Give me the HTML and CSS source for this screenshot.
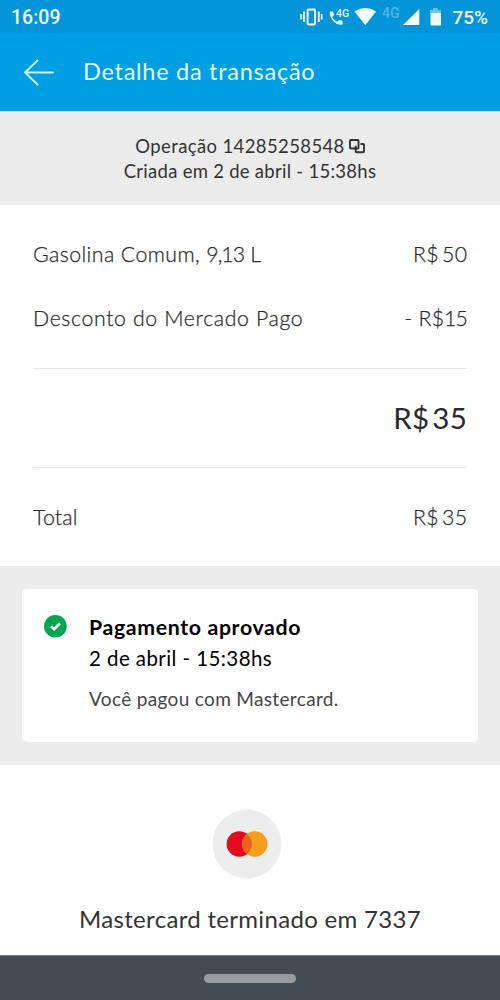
FILE: index.html
```html
<!DOCTYPE html>
<html lang="pt-BR">
<head>
<meta charset="utf-8">
<title>Detalhe da transação</title>
<link rel="stylesheet" href="styles.css">
</head>
<body>
<div class="status">
  <span class="clock">16:09</span>
  <svg class="status-icons" width="150" height="33" viewBox="0 0 150 33" fill="#f2fbff">
    <rect x="7.6" y="9.4" width="7.4" height="15" rx="1" fill="none" stroke="#f2fbff" stroke-width="2"/>
    <path d="M3 11.5h1.9v10.500H3zM.2 14h1.700v5.500H.2zM17.800 11.500h1.900v10.500h-1.900zM20.800 14h1.700v5.500h-1.700z"/>
    <path d="M30.500 11.500h2.700l.9 3.500-1.900 1.900c1.100 2.200 2.700 3.800 4.900 4.900l1.900-1.900 3.500.9v2.900c0 .8-.5 1.100-1.200 1.100-6.500-.5-11-5.600-11.600-12.100 0-.8.2-1.200.8-1.200z"/>
    <text x="36" y="17" class="tiny">4G</text>
    <path d="M54.500 11.400Q65.500 4.500 76 11.400L65.300 25.200z"/>
    <text x="82" y="18" class="network">4G</text>
    <path d="M119.300 9v16H103z"/>
    <path d="M133 8h4.500v3H133z" opacity=".45"/>
    <rect x="130.500" y="10" width="10.500" height="15.500" rx=".8"/>
    <path d="M130.500 10H141v3h-10.500z" fill="#71c6ed"/>
  </svg>
  <span class="battery">75%</span>
</div>
<header class="bar">
  <svg width="32" height="28" viewBox="0 0 32 28" fill="none" stroke="#c9f2ff" stroke-width="1.900" stroke-linecap="round" stroke-linejoin="round"><path d="M14.500 2.500 2 14.500l12.500 12M2 14.500h28"/></svg>
  <h1>Detalhe da transação</h1>
</header>
<section class="operation">
  <p><span class="op-number">Operação 14285258548</span><svg width="16" height="15" viewBox="0 0 16 15" fill="none" stroke="#333" stroke-width="1.900"><rect x="1" y="1" width="8.500" height="8.500" rx=".8"/><path d="M11.500 5h2.700q.8 0 .8.800v6.700q0 .8-.8.800H7.500q-.8 0-.8-.8V10M6.700 10V6.800"/></svg></p>
  <p class="created">Criada em 2 de abril - 15:38hs</p>
</section>
<section class="amounts">
  <div class="row first"><span class="item">Gasolina Comum, <span class="quantity">9,13</span> L</span><span class="price">R$<b>50</b></span></div>
  <div class="row second"><span class="discount">Desconto do Mercado Pago</span><span class="price">- R$<b class="tight">15</b></span></div>
  <div class="row sum"><span class="price">R$<b>35</b></span></div>
  <div class="row total"><span class="total-label">Total</span><span class="price">R$<b>35</b></span></div>
</section>
<section class="payment">
  <div class="card">
    <svg width="24" height="24" viewBox="0 0 24 24"><circle cx="12.400" cy="12.200" r="11.300" fill="#00a650"/><path d="m8 12.200 3.100 3 5.900-5.900" fill="none" stroke="#fff" stroke-width="2.700"/></svg>
    <div class="details">
      <h2>Pagamento aprovado</h2>
      <p class="date">2 de abril - 15:38hs</p>
      <p class="method">Você pagou com Mastercard.</p>
    </div>
  </div>
</section>
<section class="source">
  <svg width="70" height="70" viewBox="0 0 70 70"><circle cx="35" cy="35" r="34.500" fill="#ededed"/><circle cx="27.300" cy="35" r="12.700" fill="#e30b20"/><circle cx="42.800" cy="35" r="12.700" fill="#f79d1c"/><path d="M35.050 24.940a12.700 12.700 0 0 1 0 20.120 12.700 12.700 0 0 1 0-20.120z" fill="#ee6220"/></svg>
  <p>Mastercard terminado em 7337</p>
</section>
<footer class="nav"><span class="pill"></span></footer>
</body>
</html>
```

FILE: styles.css
```css
* { box-sizing: border-box; }
body {
  margin: 0;
  width: 500px;
  height: 1000px;
  overflow: hidden;
  display: flex;
  flex-direction: column;
  background: #fff;
  color: #333;
  font-family: Lato, "Open Sans", sans-serif;
  white-space: nowrap;
}
h1, h2, p { margin: 0; font-weight: 400; }
svg { flex: none; display: block; }

.status {
  height: 33px;
  flex: none;
  display: flex;
  align-items: center;
  padding: 0 12px 0 11px;
  background: #0494d8;
  color: #f2fbff;
  font-family: Roboto, sans-serif;
}
.clock { font-size: 19.5px; font-weight: 500; padding-top: 2px; }
.status-icons { margin-left: auto; }
.battery { width: 38px; text-align: right; font-size: 19px; font-weight: 500; padding-top: 2px; }
.tiny { font: 500 10.5px Roboto, sans-serif; }
.network { font: 500 14px Roboto, sans-serif; fill: #4fb7e7; }

.bar {
  height: 78px;
  flex: none;
  display: flex;
  align-items: center;
  padding: 0 23px 1px;
  background: #009ee3;
}
.bar h1 { margin: 0 0 2px 28px; font-size: 23.5px; color: #e9faff; letter-spacing: .73px; }

.operation {
  height: 94px;
  flex: none;
  padding-top: 22px;
  background: #ececec;
  border-top: 1px solid #dcdfe3;
}
.operation p {
  height: 25px;
  display: flex;
  align-items: center;
  justify-content: center;
  font-size: 18.5px;
  line-height: 25px;
}
.op-number { letter-spacing: .38px; }
.created { letter-spacing: .27px; }
.operation svg { margin-left: 4px; }

.amounts { height: 361px; flex: none; padding: 18px 33px 0; }
.row { display: flex; align-items: center; justify-content: space-between; font-size: 21.3px; line-height: 26px; font-weight: 300; color: #2b2b2b; -webkit-text-stroke: .25px #2b2b2b; }
.row b { font-weight: inherit; margin-left: 3px; letter-spacing: .4px; margin-right: -.4px; }
.row .tight { margin: 0 0 0 -.5px; letter-spacing: -.8px; }
.item { letter-spacing: .42px; }
.quantity { letter-spacing: -1px; }
.discount { letter-spacing: .62px; }
.total-label { letter-spacing: .2px; }
.price { letter-spacing: .3px; }
.first { height: 64px; padding-bottom: 2px; }
.second { height: 82px; padding-bottom: 20px; }
.sum {
  height: 100px;
  justify-content: flex-end;
  margin-top: -1px;
  padding-bottom: 1px;
  border: solid #e8e8e8;
  border-width: 1px 0;
  font-size: 29.5px;
  font-weight: 400;
  -webkit-text-stroke: 0;
}
.total { height: 99px; padding-bottom: 2px; }

.payment { height: 199px; flex: none; padding: 23px 22px; background: #ececec; }
.card { height: 153px; display: flex; background: #fff; border-radius: 5px; padding: 25px 21px; }
.details { margin-left: 22px; color: #000; }
.details h2, .date { height: 31px; line-height: 26px; font-size: 20.5px; }
.details h2 { font-size: 21.3px; font-weight: 700; letter-spacing: .64px; }
.date { letter-spacing: .42px; }
.method { margin-top: 10px; line-height: 26px; font-size: 19px; color: #444; letter-spacing: .34px; }

.source { height: 190px; flex: none; padding-top: 44px; display: flex; flex-direction: column; align-items: center; }
.source svg { margin-right: 6px; }
.source p { margin-top: 25px; line-height: 30px; font-size: 24px; letter-spacing: .31px; }

.nav { height: 45px; flex: none; display: flex; justify-content: center; padding-top: 18px; background: #444c51; border-top: 1px solid #777d80; }
.pill { width: 92px; height: 9px; border-radius: 5px; background: #999c9e; }
```
